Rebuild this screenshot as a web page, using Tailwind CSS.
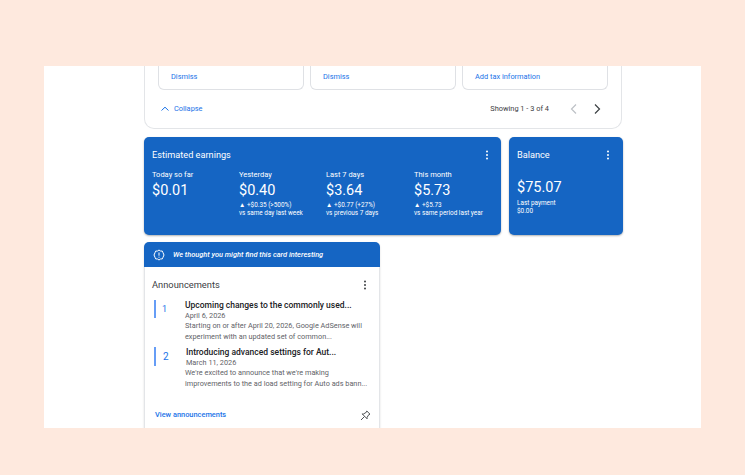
<!DOCTYPE html>
<html lang="en">
<head>
    <meta charset="UTF-8">
    <title>AdSense Home</title>
    <script src="https://cdn.jsdelivr.net/npm/@tailwindcss/browser@4"></script>
</head>
<body class="bg-[#fee9de] font-['Roboto',sans-serif] antialiased w-[745px] h-[475px] overflow-hidden">
    <div class="ml-[44px] mt-[66px] w-[657px] h-[362px] bg-white overflow-hidden pl-[100px]">
        <div class="w-[478px] h-[63px] border border-t-0 border-[#e3e5e8] rounded-b-[10px] px-[13px]">
            <div class="flex gap-[6px]">
                <div class="w-[146px] h-[24px] border border-t-0 border-[#dfe1e5] rounded-b-[6px] pl-[12px] text-[7.4px] leading-[21px] text-[#1a73e8]">Dismiss</div>
                <div class="w-[146px] h-[24px] border border-t-0 border-[#dfe1e5] rounded-b-[6px] pl-[12px] text-[7.4px] leading-[21px] text-[#1a73e8]">Dismiss</div>
                <div class="w-[146px] h-[24px] border border-t-0 border-[#dfe1e5] rounded-b-[6px] pl-[12px] text-[7.4px] leading-[21px] text-[#1a73e8]">Add tax information</div>
            </div>
            <div class="flex items-center h-[12px] mt-[13px]">
                <svg class="ml-[2px]" width="10" height="10" viewBox="0 0 10 10" fill="none" stroke="#1a73e8" stroke-width="1"><path d="M1.5 6.5 5 3.2l3.5 3.3"/></svg>
                <span class="ml-[4px] text-[7.4px] text-[#1a73e8]">Collapse</span>
                <span class="ml-auto text-[7.4px] text-[#3c4043]">Showing 1 - 3 of 4</span>
                <svg class="ml-[20px]" width="10" height="12" viewBox="0 0 10 12" fill="none" stroke="#bdc1c6" stroke-width="1.2"><path d="M7 1.5 2.5 6 7 10.5"/></svg>
                <svg class="ml-[13px] mr-[6px]" width="10" height="12" viewBox="0 0 10 12" fill="none" stroke="#3c4043" stroke-width="1.2"><path d="M3 1.5 7.5 6 3 10.5"/></svg>
            </div>
        </div>

        <div class="flex gap-[8px] mt-[8px]">
            <div class="w-[357px] h-[98px] bg-[#1565c3] rounded-[5px] shadow-[0_1px_2px_rgba(60,64,67,0.4)] pl-[8px] pt-[12px] text-white">
                <div class="flex items-center h-[12px]">
                    <span class="text-[9.2px]">Estimated earnings</span>
                    <svg class="ml-auto mr-[12px]" width="4" height="10" viewBox="0 0 4 10" fill="white"><circle cx="2" cy="1.5" r="1"/><circle cx="2" cy="5" r="1"/><circle cx="2" cy="8.5" r="1"/></svg>
                </div>
                <div class="grid grid-cols-[87px_87px_88px_1fr] mt-[8px]">
                    <div>
                        <div class="text-[7.5px] leading-[12px]">Today so far</div>
                        <div class="text-[14.5px] leading-[20px]">$0.01</div>
                    </div>
                    <div>
                        <div class="text-[7.5px] leading-[12px]">Yesterday</div>
                        <div class="text-[14.5px] leading-[20px]">$0.40</div>
                        <div class="text-[6.4px] leading-[8px]">▲ +$0.35 (&gt;500%)</div>
                        <div class="text-[6.4px] leading-[8px]">vs same day last week</div>
                    </div>
                    <div>
                        <div class="text-[7.5px] leading-[12px]">Last 7 days</div>
                        <div class="text-[14.5px] leading-[20px]">$3.64</div>
                        <div class="text-[6.4px] leading-[8px]">▲ +$0.77 (+27%)</div>
                        <div class="text-[6.4px] leading-[8px]">vs previous 7 days</div>
                    </div>
                    <div>
                        <div class="text-[7.5px] leading-[12px]">This month</div>
                        <div class="text-[14.5px] leading-[20px]">$5.73</div>
                        <div class="text-[6.4px] leading-[8px]">▲ +$5.73</div>
                        <div class="text-[6.4px] leading-[8px]">vs same period last year</div>
                    </div>
                </div>
            </div>
            <div class="w-[114px] h-[98px] bg-[#1565c3] rounded-[5px] shadow-[0_1px_2px_rgba(60,64,67,0.4)] pl-[8px] pt-[12px] text-white">
                <div class="flex items-center h-[12px]">
                    <span class="text-[9.2px]">Balance</span>
                    <svg class="ml-auto mr-[13px]" width="4" height="10" viewBox="0 0 4 10" fill="white"><circle cx="2" cy="1.5" r="1"/><circle cx="2" cy="5" r="1"/><circle cx="2" cy="8.5" r="1"/></svg>
                </div>
                <div class="text-[14.5px] leading-[20px] mt-[17px]">$75.07</div>
                <div class="text-[6.4px] leading-[8px] mt-[1px]">Last payment</div>
                <div class="text-[6.4px] leading-[8px]">$0.00</div>
            </div>
        </div>

        <div class="w-[236px] h-[200px] mt-[7px] rounded-[5px] border border-[#e3e5e8] shadow-[0_1px_2px_rgba(60,64,67,0.2)]">
            <div class="flex items-center h-[25px] -mx-px -mt-px bg-[#1565c3] rounded-t-[5px] pl-[9px] text-white">
                <svg width="12" height="12" viewBox="0 0 12 12" fill="none" stroke="white" stroke-width="1"><path d="M6 1 7.5 2l1.8.1.7 1.6L11 6l-1 2.3-.7 1.6-1.8.1L6 11 4.5 10l-1.8-.1L2 8.3 1 6l1-2.3.7-1.6L4.500 2z"/><path d="M6 3.500v3.200M6 7.700v1"/></svg>
                <span class="ml-[8px] text-[7.4px] italic font-medium">We thought you might find this card interesting</span>
            </div>
            <div class="flex items-center h-[12px] mt-[12px] pl-[7px]">
                <span class="text-[9.3px] text-[#3c4043]">Announcements</span>
                <svg class="ml-auto mr-[12px]" width="4" height="10" viewBox="0 0 4 10" fill="#3c4043"><circle cx="2" cy="1.5" r="1"/><circle cx="2" cy="5" r="1"/><circle cx="2" cy="8.5" r="1"/></svg>
            </div>
            <div class="flex mt-[9px] pl-[9px]">
                <div class="w-[2px] h-[18px] bg-[#669df6]"></div>
                <div class="w-[29px] pl-[6px] text-[9px] leading-[18px] text-[#1a73e8]">1</div>
                <div>
                    <div class="text-[8.5px] leading-[10.5px] font-medium text-[#202124]">Upcoming changes to the commonly used...</div>
                    <div class="text-[7.3px] leading-[10.5px] text-[#5f6368]">April 6, 2026</div>
                    <div class="text-[7.3px] leading-[10.5px] text-[#5f6368]">Starting on or after April 20, 2026, Google AdSense will</div>
                    <div class="text-[7.3px] leading-[10.5px] text-[#5f6368]">experiment with an updated set of common...</div>
                </div>
            </div>
            <div class="flex mt-[5px] pl-[9px]">
                <div class="w-[2px] h-[19px] bg-[#669df6]"></div>
                <div class="w-[30px] pl-[7px] text-[10px] leading-[19px] text-[#1a73e8]">2</div>
                <div>
                    <div class="text-[8.5px] leading-[10.5px] font-medium text-[#202124]">Introducing advanced settings for Aut...</div>
                    <div class="text-[7.3px] leading-[10.5px] text-[#5f6368]">March 11, 2026</div>
                    <div class="-ml-px text-[7.3px] leading-[10.5px] text-[#5f6368]">We're excited to announce that we're making</div>
                    <div class="-ml-px text-[7.3px] leading-[10.5px] text-[#5f6368] whitespace-nowrap">improvements to the ad load setting for Auto ads bann...</div>
                </div>
            </div>
            <div class="flex items-center h-[12px] mt-[20px] pl-[10px]">
                <span class="text-[7.4px] font-medium text-[#1a73e8]">View announcements</span>
                <svg class="ml-auto mr-[8px]" width="11" height="11" viewBox="0 0 11 11" fill="none" stroke="#3c4043" stroke-width="0.9"><path d="M6.800 1 10 4.200 8.800 4.600 7 7.500 7.100 8.800 2.200 3.900 3.500 4 6.400 2.200z"/><path d="M4.500 6.500 1 10"/></svg>
            </div>
        </div>
    </div>
</body>
</html>
